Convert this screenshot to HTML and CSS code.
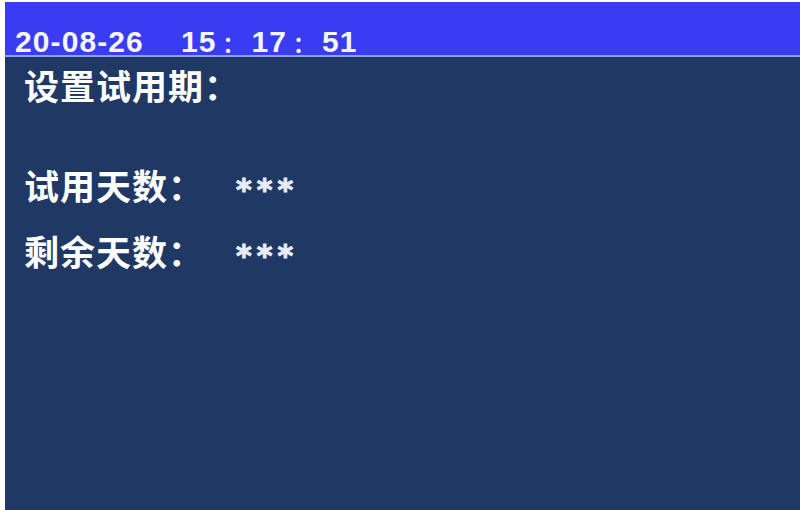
FILE: index.html
```html
<!DOCTYPE html>
<html lang="zh-CN">
<head>
<meta charset="utf-8">
<title>设置试用期</title>
<link rel="stylesheet" href="styles.css">
</head>
<body>
<div class="screen">
  <div class="topbar">
    <span class="date">20-08-26</span>
    <span class="time">15<span class="colon">：</span>17<span class="colon">：</span>51</span>
  </div>
  <div class="content">
    <div class="title">设置试用期：</div>
    <div class="row first">
      <span class="label">试用天数：</span>
      <span class="value">***</span>
    </div>
    <div class="row">
      <span class="label">剩余天数：</span>
      <span class="value">***</span>
    </div>
  </div>
</div>
</body>
</html>
```
FILE: styles.css
```css
html, body {
  margin: 0;
  padding: 0;
  background: #ffffff;
  width: 800px;
  height: 510px;
  overflow: hidden;
}
.screen {
  margin: 2px 0 0 5px;
  width: 795px;
  height: 508px;
  background: #1f3864;
  display: flex;
  flex-direction: column;
}
.topbar {
  height: 53px;
  background: #3a3cf4;
  border-bottom: 2px solid #8ea2e6;
  box-sizing: content-box;
  display: flex;
  align-items: flex-end;
  padding-left: 10px;
  color: #f4f6ff;
  font-family: "Liberation Sans", Arial, sans-serif;
  font-weight: 700;
  font-size: 30px;
  line-height: 26px;
  letter-spacing: 1.1px;
}
.time {
  margin-left: 37px;
}
.colon {
  display: inline-block;
  width: 35px;
  text-align: center;
  font-family: "Noto Sans CJK SC", sans-serif;
  font-size: 22px;
}
.content {
  padding: 10px 0 0 19px;
  color: #ffffff;
  font-family: "Noto Sans CJK SC", sans-serif;
  font-weight: 700;
  font-size: 35px;
  line-height: 36px;
  letter-spacing: 1px;
}
.title {
  margin-bottom: 64px;
}
.row {
  display: flex;
  align-items: flex-start;
  margin-bottom: 25px;
}
.label {
  width: 212px;
}
.value {
  margin-top: 5px;
  font-family: "DejaVu Sans", sans-serif;
  font-weight: 700;
  font-size: 30px;
  line-height: 36px;
  letter-spacing: 5px;
  color: #e8ecf8;
  -webkit-text-stroke: 1px #e8ecf8;
}
```
